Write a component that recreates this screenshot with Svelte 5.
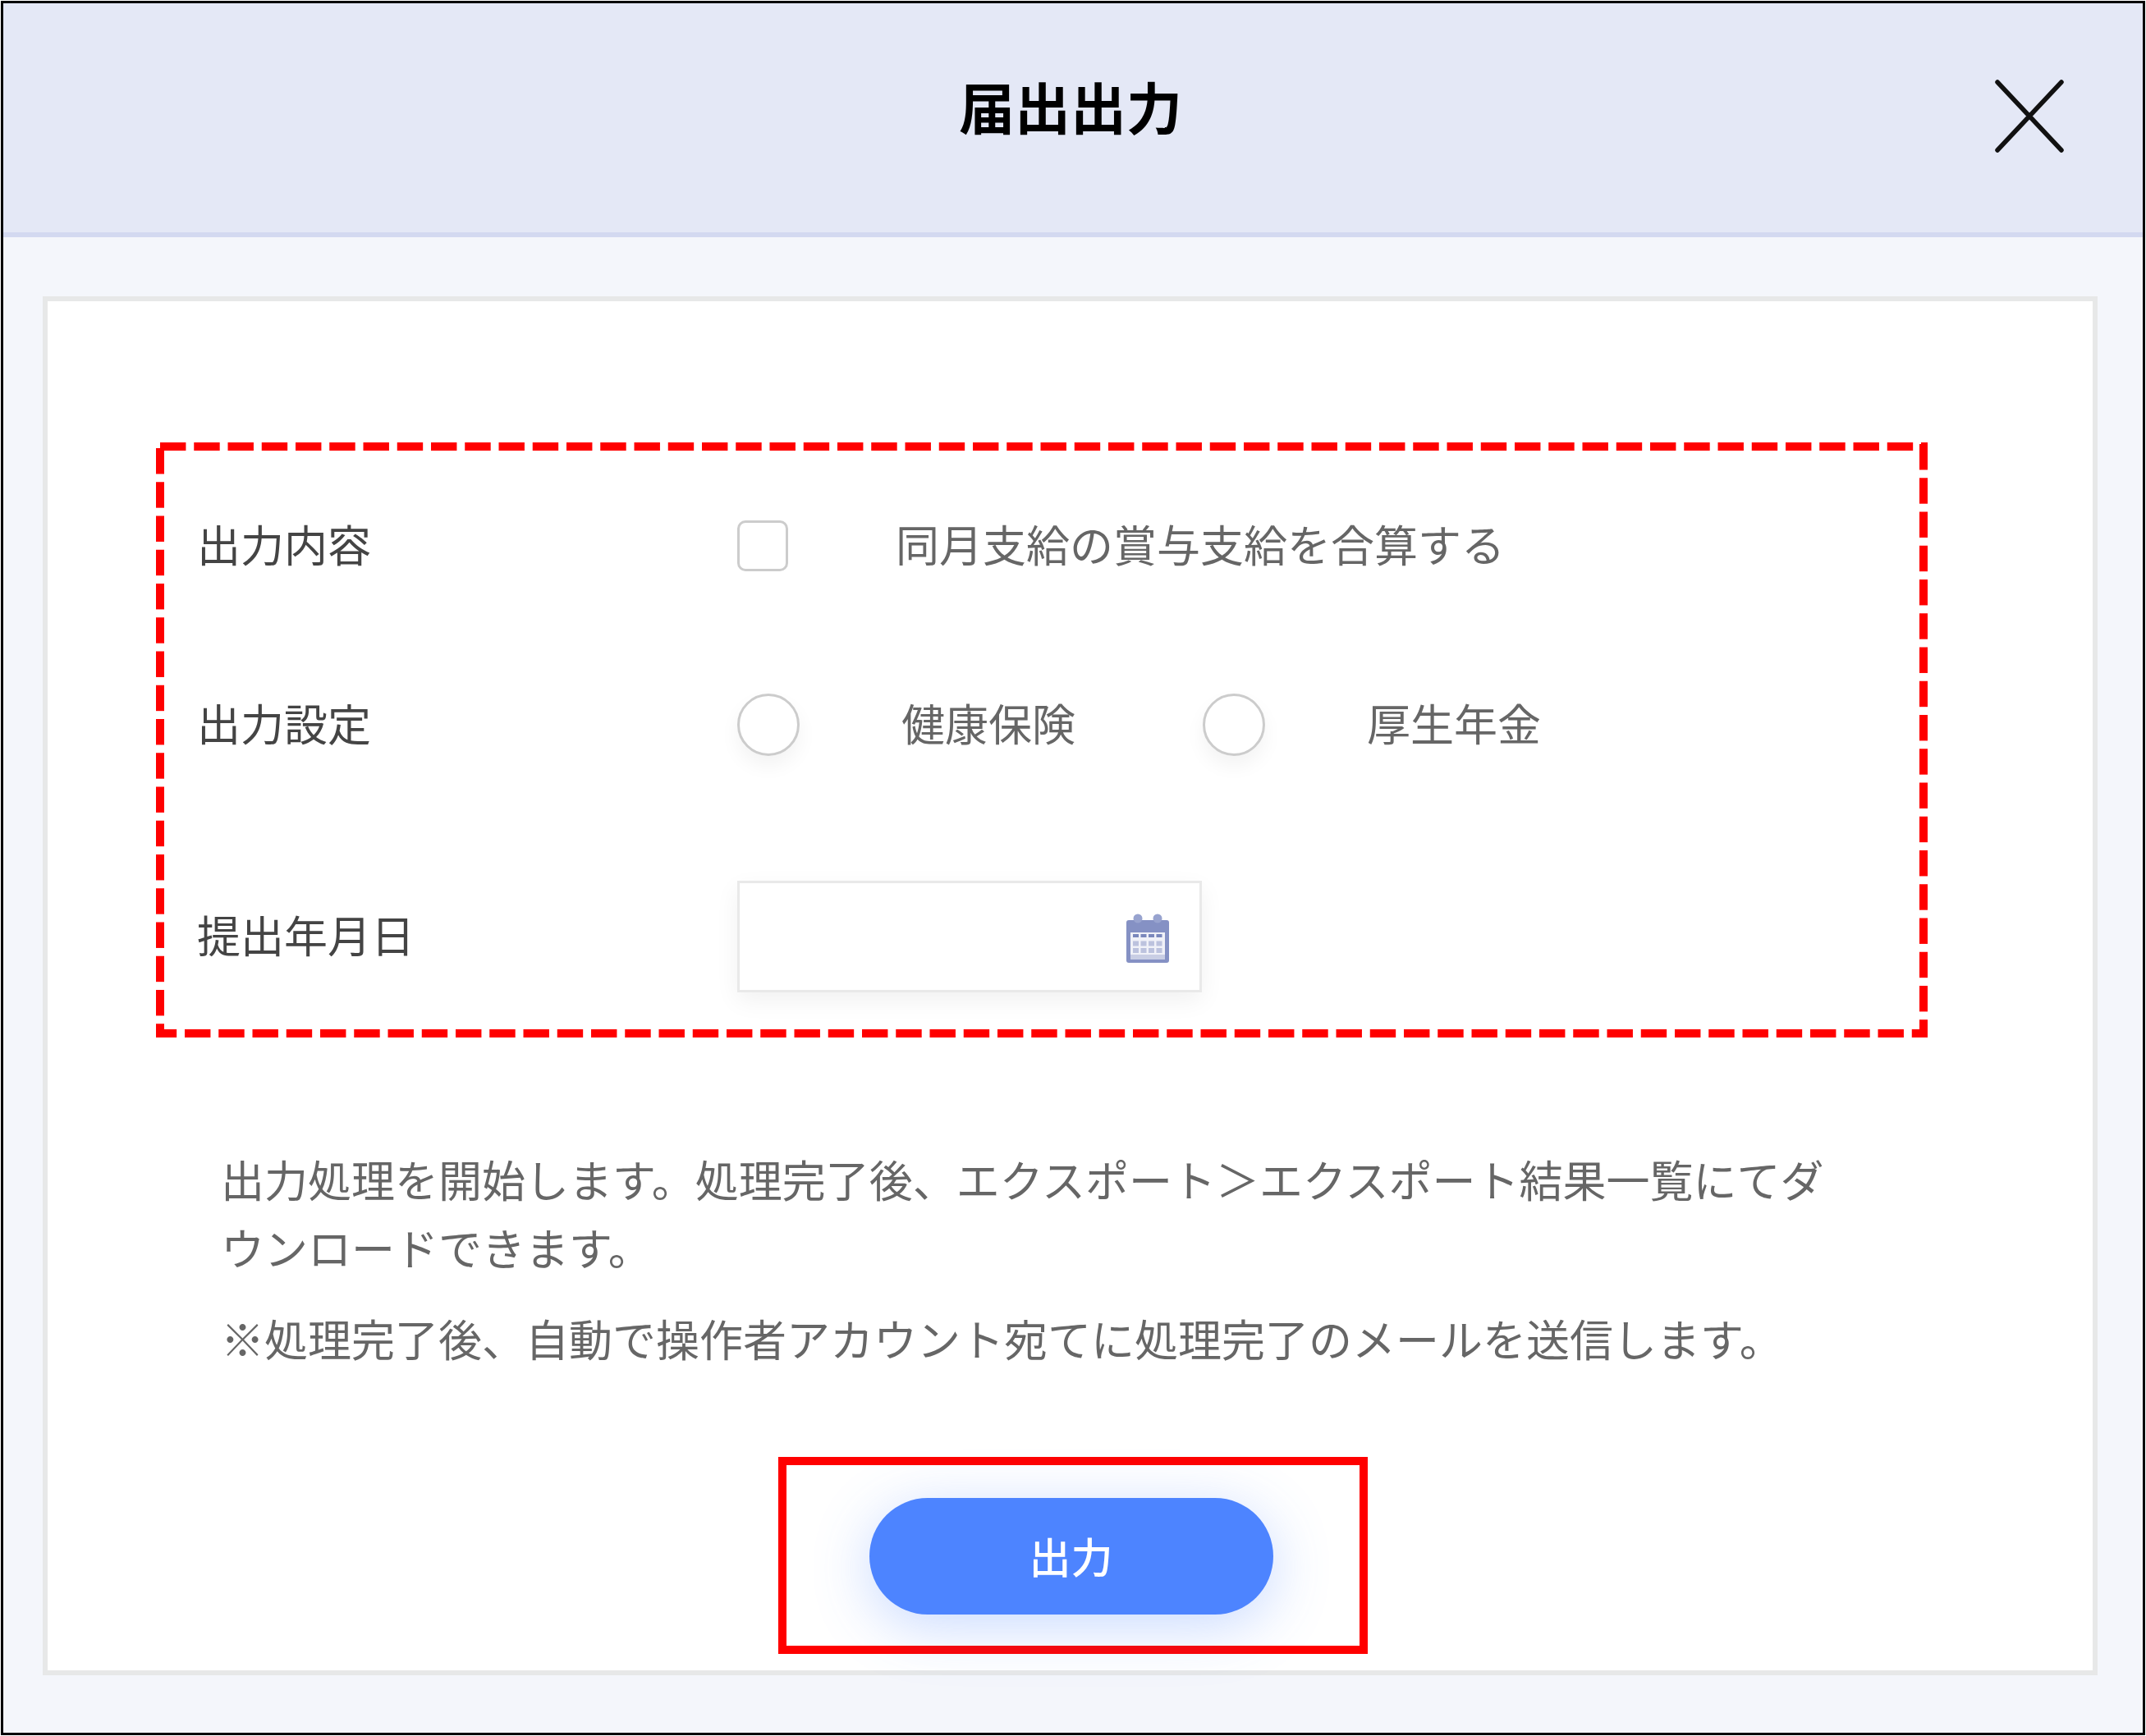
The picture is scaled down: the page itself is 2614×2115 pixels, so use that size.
<script>
  const label1 = '出力処理を開始します。処理完了後、エクスポート＞エクスポート結果一覧にてダウンロードできます。'
  const label2 = '※処理完了後、自動で操作者アカウント宛てに処理完了のメールを送信します。'
</script>

<div class="frame">
  <header class="head">
    <h1>届出出力</h1>
    <button class="close" aria-label="close">
      <svg width="84" height="89" viewBox="0 0 84 89">
        <path d="M3 3 L81 86 M81 3 L3 86" stroke="#111" stroke-width="5.5" stroke-linecap="round" fill="none" />
      </svg>
    </button>
  </header>

  <main class="body">
    <section class="card">
      <div class="form">
        <div class="row first">
          <span class="label">出力内容</span>
          <div class="controls">
            <span class="check"></span>
            <span class="opt check-text">同月支給の賞与支給を合算する</span>
          </div>
        </div>
        <div class="row second">
          <span class="label">出力設定</span>
          <div class="controls">
            <span class="radio"></span>
            <span class="opt radio-text">健康保険</span>
            <span class="radio"></span>
            <span class="opt radio-text">厚生年金</span>
          </div>
        </div>
        <div class="row third">
          <span class="label">提出年月日</span>
          <div class="date">
            <svg width="52" height="60" viewBox="0 0 52 60">
              <path d="M3 8h46a3 3 0 0 1 3 3v46a3 3 0 0 1-3 3H3a3 3 0 0 1-3-3V11a3 3 0 0 1 3-3z" fill="#8591c4" />
              <rect x="5" y="23" width="42" height="27" fill="#f0f1f8" />
              <rect x="5" y="50" width="42" height="6" fill="#c9cee4" />
              <circle cx="14" cy="6" r="5.5" fill="#98a3cf" />
              <circle cx="38" cy="6" r="5.5" fill="#98a3cf" />
              {#each [0, 1, 2] as r}
                {#each [0, 1, 2, 3] as c}
                  <rect x={8 + c * 9.5} y={25 + r * 8.5} width="7" height={r === 0 ? 4 : 6} fill={r === 0 ? '#7a87bc' : '#bcc2de'} />
                {/each}
              {/each}
            </svg>
          </div>
        </div>
      </div>

      <div class="notes">
        <p>{label1}</p>
        <p class="second-note">{label2}</p>
      </div>

      <div class="action">
        <button class="submit">出力</button>
      </div>
    </section>
  </main>
</div>

<style>
  :global(body) {
    margin: 0;
    background: #fff;
  }

  .frame {
    box-sizing: border-box;
    width: 2612px;
    height: 2113px;
    margin: 1px;
    border: 3px solid #000;
    display: flex;
    flex-direction: column;
    background: #f4f6fb;
    font-family: "Noto Sans CJK JP", "Noto Sans", sans-serif;
    overflow: hidden;
  }

  .head {
    box-sizing: border-box;
    height: 285px;
    flex: none;
    display: flex;
    align-items: center;
    justify-content: center;
    position: relative;
    background: #e4e8f6;
    border-bottom: 6px solid #d3d9f0;
  }

  h1 {
    margin: 0 6px 29px 0;
    font-size: 68px;
    font-weight: 700;
    line-height: 1;
    color: #000;
  }

  .close {
    position: absolute;
    right: 96px;
    top: 93px;
    padding: 0;
    border: none;
    background: none;
    display: block;
    line-height: 0;
  }

  .body {
    flex: 1;
    padding: 72px 55px 70px 48px;
    display: flex;
  }

  .card {
    box-sizing: border-box;
    flex: 1;
    background: #fff;
    border: 6px solid #e7e8e8;
    padding: 172px 0 0;
  }

  /* dashes are laid out per side so the corners stay notched like the annotation */
  .form {
    box-sizing: border-box;
    margin-left: 132px;
    width: 2158px;
    height: 725px;
    padding: 61px 0 0 50px;
    background-image:
      linear-gradient(90deg, #f00 31px, transparent 31px),
      linear-gradient(90deg, #f00 31px, transparent 31px),
      linear-gradient(#f00 31px, transparent 31px),
      linear-gradient(#f00 31px, transparent 31px);
    background-size:
      41.25px 10px,
      41.25px 10px,
      10px 41.25px,
      10px 41.25px;
    background-repeat: repeat-x, repeat-x, repeat-y, repeat-y;
    background-position:
      5px 0,
      35px 100%,
      0 7px,
      100% 2px;
  }

  .row {
    display: grid;
    grid-template-columns: 658px 1fr;
    align-items: center;
    height: 130px;
  }

  .row.second {
    margin-top: 88px;
  }

  .row.third {
    margin-top: 125px;
    height: 136px;
  }

  .label {
    font-size: 53px;
    line-height: 1;
    color: #444;
    margin-bottom: 6px;
  }

  .controls {
    display: flex;
    align-items: center;
  }

  .opt {
    font-size: 53px;
    line-height: 1;
    color: #666;
    margin-bottom: 6px;
  }

  .check {
    box-sizing: border-box;
    width: 62px;
    height: 62px;
    border: 3px solid #ccc;
    border-radius: 10px;
    margin-right: 131px;
  }

  .radio {
    box-sizing: border-box;
    width: 76px;
    height: 76px;
    border: 3px solid #ccc;
    border-radius: 50%;
    box-shadow: 0 12px 24px rgba(0, 0, 0, 0.05);
    margin-right: 124px;
  }

  .radio-text {
    width: 367px;
  }

  .date {
    box-sizing: border-box;
    width: 566px;
    height: 136px;
    border: 3px solid #e9e9e9;
    box-shadow: 0 10px 28px rgba(0, 0, 0, 0.06);
    display: flex;
    align-items: center;
    justify-content: flex-end;
    padding: 4px 37px 0 0;
  }

  .notes {
    margin: 131px 0 0 211px;
    width: 1975px;
    font-size: 53px;
    line-height: 83px;
    color: #666;
  }

  .notes p {
    margin: 0;
  }

  .notes .second-note {
    margin-top: 28px;
  }

  .action {
    box-sizing: border-box;
    width: 718px;
    height: 240px;
    margin: 103px 0 0 890px;
    border: 10px solid #f00;
    padding: 1px 5px 0 0;
    display: flex;
    align-items: center;
    justify-content: center;
  }

  .submit {
    width: 492px;
    height: 142px;
    border: none;
    border-radius: 71px;
    background: #4d84ff;
    color: #fff;
    font-family: inherit;
    font-size: 51px;
    font-weight: 500;
    padding: 0 0 2px;
    box-shadow: 0 14px 70px rgba(77, 132, 255, 0.3);
  }
</style>
